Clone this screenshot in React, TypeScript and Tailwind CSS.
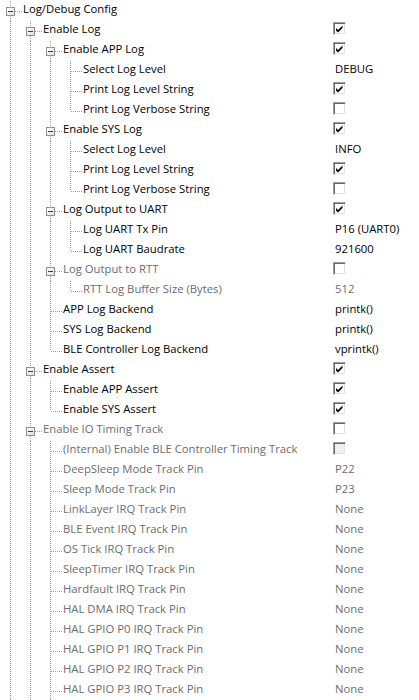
import React from "react";

type Node = {
  label: string;
  value?: string | boolean;
  disabled?: boolean;
  cbDisabled?: boolean;
  more?: boolean;
  children?: Node[];
};

type Row = Node & { level: number; cont: boolean[]; hasNext: boolean };

const ioPins: Node[] = [
  { label: "DeepSleep Mode Track Pin", value: "P22" },
  { label: "Sleep Mode Track Pin", value: "P23" },
  { label: "LinkLayer IRQ Track Pin", value: "None" },
  { label: "BLE Event IRQ Track Pin", value: "None" },
  { label: "OS Tick IRQ Track Pin", value: "None" },
  { label: "SleepTimer IRQ Track Pin", value: "None" },
  { label: "Hardfault IRQ Track Pin", value: "None" },
  { label: "HAL DMA IRQ Track Pin", value: "None" },
  { label: "HAL GPIO P0 IRQ Track Pin", value: "None" },
  { label: "HAL GPIO P1 IRQ Track Pin", value: "None" },
  { label: "HAL GPIO P2 IRQ Track Pin", value: "None" },
  { label: "HAL GPIO P3 IRQ Track Pin", value: "None", more: true },
].map((n) => ({ ...n, disabled: true }));

const tree: Node[] = [
  {
    label: "Log/Debug Config",
    more: true,
    children: [
      {
        label: "Enable Log",
        value: true,
        children: [
          {
            label: "Enable APP Log",
            value: true,
            children: [
              { label: "Select Log Level", value: "DEBUG" },
              { label: "Print Log Level String", value: true },
              { label: "Print Log Verbose String", value: false },
            ],
          },
          {
            label: "Enable SYS Log",
            value: true,
            children: [
              { label: "Select Log Level", value: "INFO" },
              { label: "Print Log Level String", value: true },
              { label: "Print Log Verbose String", value: false },
            ],
          },
          {
            label: "Log Output to UART",
            value: true,
            children: [
              { label: "Log UART Tx Pin", value: "P16 (UART0)" },
              { label: "Log UART Baudrate", value: "921600" },
            ],
          },
          {
            label: "Log Output to RTT",
            value: false,
            disabled: true,
            children: [{ label: "RTT Log Buffer Size (Bytes)", value: "512", disabled: true }],
          },
          { label: "APP Log Backend", value: "printk()" },
          { label: "SYS Log Backend", value: "printk()" },
          { label: "BLE Controller Log Backend", value: "vprintk()" },
        ],
      },
      {
        label: "Enable Assert",
        value: true,
        children: [
          { label: "Enable APP Assert", value: true },
          { label: "Enable SYS Assert", value: true },
        ],
      },
      {
        label: "Enable IO Timing Track",
        value: false,
        disabled: true,
        more: true,
        children: [
          {
            label: "(Internal) Enable BLE Controller Timing Track",
            value: false,
            disabled: true,
            cbDisabled: true,
          },
          ...ioPins,
        ],
      },
    ],
  },
];

function flatten(nodes: Node[], level: number, cont: boolean[], out: Row[]) {
  nodes.forEach((n, i) => {
    const hasNext = n.more ?? i < nodes.length - 1;
    out.push({ ...n, level, cont, hasNext });
    if (n.children) flatten(n.children, level + 1, [...cont, hasNext], out);
  });
  return out;
}

const rows = flatten(tree, 0, [], []);

const LINE = "#a0a0a0";

function Guide({ on }: { on: boolean }) {
  return (
    <svg width="20" height="20" className="shrink-0" shapeRendering="crispEdges">
      {on && <line x1="10.5" y1="0" x2="10.5" y2="20" stroke={LINE} strokeDasharray="1 1" />}
    </svg>
  );
}

function Branch({ box, hasNext }: { box: boolean; hasNext: boolean }) {
  return (
    <svg width="23" height="20" className="shrink-0" shapeRendering="crispEdges">
      <line x1="10.5" y1="0" x2="10.5" y2={box ? 6 : 10} stroke={LINE} strokeDasharray="1 1" />
      {hasNext && (
        <line x1="10.5" y1={box ? 15 : 10} x2="10.5" y2="20" stroke={LINE} strokeDasharray="1 1" />
      )}
      <line x1={box ? 15 : 11} y1="10.5" x2="22" y2="10.5" stroke={LINE} strokeDasharray="1 1" />
      {box && (
        <>
          <defs>
            <linearGradient id="bx" x1="0" y1="0" x2="1" y2="1">
              <stop offset="0" stopColor="#ffffff" />
              <stop offset="1" stopColor="#dcdcdc" />
            </linearGradient>
          </defs>
          <rect x="6.5" y="6.5" width="8" height="8" fill="url(#bx)" stroke="#8e8f8f" />
          <line x1="8" y1="10.5" x2="13" y2="10.5" stroke="#3c3c3c" />
        </>
      )}
    </svg>
  );
}

function Check({ checked, disabled }: { checked: boolean; disabled?: boolean }) {
  return (
    <div
      className={`mt-px w-[13px] h-[13px] border border-t-[#a0a0a0] border-l-[#a0a0a0] border-r-white border-b-white shadow-[inset_1px_1px_0_#696969,inset_-1px_-1px_0_#e3e3e3] ${
        disabled ? "bg-[#f0f0f0]" : "bg-white"
      }`}
    >
      {checked && (
        <svg width="11" height="11">
          <polygon points="2,5 4,7 8.5,2.5 8.5,5 4,9.5 2,7.5" fill="#000" />
        </svg>
      )}
    </div>
  );
}

export default function App() {
  return (
    <div
      className="w-[419px] h-[700px] overflow-hidden bg-white pt-px text-[11.3px] text-black"
      style={{ fontFamily: '"Open Sans", "Noto Sans", sans-serif' }}
    >
      {rows.map((r, idx) => (
        <div key={idx} className="flex h-[20px] items-start">
          <div className="flex w-[333px] shrink-0 items-start">
            {r.cont.map((c, k) => (
              <Guide key={k} on={c} />
            ))}
            <Branch box={!!r.children} hasNext={r.hasNext} />
            <span className={`leading-[15px] whitespace-nowrap ${r.disabled ? "text-[#6d6d6d]" : ""}`}>
              {r.label}
            </span>
          </div>
          {typeof r.value === "boolean" ? (
            <Check checked={r.value} disabled={r.cbDisabled} />
          ) : r.value ? (
            <span className={`pl-[2px] leading-[15px] whitespace-nowrap ${r.disabled ? "text-[#6d6d6d]" : ""}`}>
              {r.value}
            </span>
          ) : null}
        </div>
      ))}
    </div>
  );
}
